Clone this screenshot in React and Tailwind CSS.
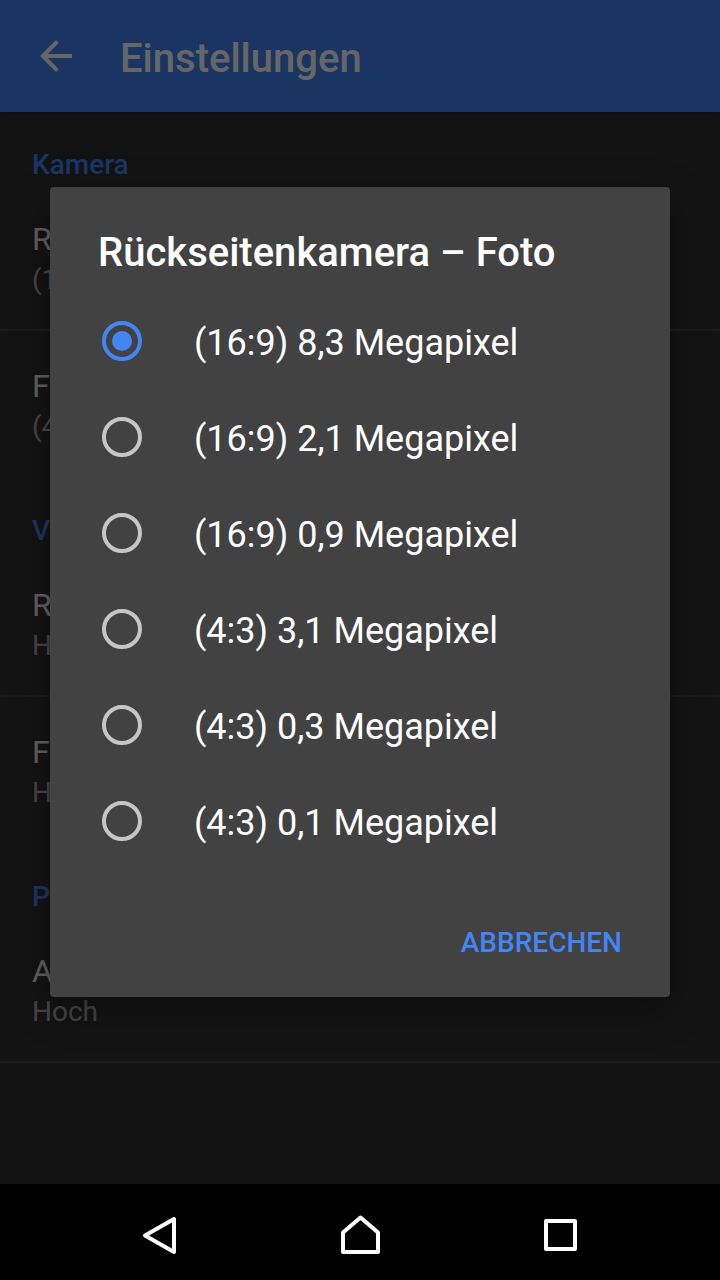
import { useState } from 'react';

const sections = [
  {
    title: 'Kamera',
    items: [
      { title: 'Rückseitenkamera – Foto', summary: '(16:9) 8,3 Megapixel' },
      { title: 'Frontkamera – Foto', summary: '(4:3) 5,0 Megapixel' },
    ],
  },
  {
    title: 'Video',
    items: [
      { title: 'Rückseitenkamera – Video', summary: 'HD 1080p' },
      { title: 'Frontkamera – Video', summary: 'HD 1080p' },
    ],
  },
  {
    title: 'Panorama',
    items: [{ title: 'Auflösung', summary: 'Hoch' }],
  },
];

const resolutions = [
  '(16:9) 8,3 Megapixel',
  '(16:9) 2,1 Megapixel',
  '(16:9) 0,9 Megapixel',
  '(4:3) 3,1 Megapixel',
  '(4:3) 0,3 Megapixel',
  '(4:3) 0,1 Megapixel',
];

function Header() {
  return (
    <header className="relative flex h-28 items-center gap-10 bg-[#4285f4] px-8 shadow-[0_2px_6px_rgba(0,0,0,0.3)]">
      <button type="button" aria-label="Zurück">
        <svg viewBox="0 0 24 24" className="h-12 w-12 fill-white">
          <path d="M20 11H7.83l5.59-5.59L12 4l-8 8 8 8 1.41-1.41L7.83 13H20v-2z" />
        </svg>
      </button>
      <h1 className="pt-1.5 text-[40px] leading-[52px] font-medium">Einstellungen</h1>
    </header>
  );
}

function Settings() {
  return (
    <div className="flex flex-col gap-0.5">
      {sections.map((section) => (
        <section key={section.title}>
          <h2 className="h-18 px-8 pt-8 text-[28px] leading-[42px] font-medium text-[#4285f4]">
            {section.title}
          </h2>
          <ul className="divide-y-2 divide-white/10">
            {section.items.map((item) => (
              <li key={item.title} className="px-8 pt-9 pb-[27px]">
                <p className="text-[32px] leading-[38px] text-white/90">{item.title}</p>
                <p className="text-[28px] leading-[44px] text-white/60">{item.summary}</p>
              </li>
            ))}
          </ul>
        </section>
      ))}
      <hr className="-mt-0.5 border-t-2 border-white/10" />
    </div>
  );
}

function ResolutionDialog({ value, onChange, onClose }) {
  return (
    <div className="absolute inset-0 flex items-center bg-black/60 px-[50px]">
      <div
        role="dialog"
        aria-labelledby="dialog-title"
        className="w-full rounded-sm bg-[#424242] shadow-[0_12px_40px_rgba(0,0,0,0.3)]"
      >
        <h2 id="dialog-title" className="px-12 pt-10 pb-3.5 text-[40px] leading-[52px] font-medium">
          Rückseitenkamera – Foto
        </h2>
        {resolutions.map((resolution) => (
          <label key={resolution} className="flex h-24 items-center gap-[52px] px-[52px]">
            <input
              type="radio"
              name="resolution"
              checked={value === resolution}
              onChange={() => onChange(resolution)}
              className="h-10 w-10 shrink-0 appearance-none rounded-full border-4 border-[#c6c6c6] bg-clip-content p-1.5 checked:border-[#4285f4] checked:bg-[#4285f4]"
            />
            <span className="pt-1 text-[36px] leading-[42px]">{resolution}</span>
          </label>
        ))}
        <div className="flex justify-end px-8 pt-9 pb-4">
          <button
            type="button"
            onClick={onClose}
            className="h-[76px] px-4 text-[28px] font-medium text-[#4285f4]"
          >
            ABBRECHEN
          </button>
        </div>
      </div>
    </div>
  );
}

function NavigationBar() {
  const iconClass = 'h-12 w-12 fill-none stroke-white stroke-4';

  return (
    <nav className="grid h-24 grid-cols-3 place-items-center bg-black px-[60px]">
      <button type="button" aria-label="Zurück">
        <svg viewBox="0 0 48 48" strokeLinejoin="round" className={iconClass}>
          <path d="M9 27.5 38 11V44z" />
        </svg>
      </button>
      <button type="button" aria-label="Startseite">
        <svg viewBox="0 0 48 48" strokeLinejoin="round" className={iconClass}>
          <path d="M24.5 9.5 42 24.5V44H7V24.5z" />
        </svg>
      </button>
      <button type="button" aria-label="Letzte Apps">
        <svg viewBox="0 0 48 48" strokeLinejoin="round" className={iconClass}>
          <path d="M10 13H39V41H10z" />
        </svg>
      </button>
    </nav>
  );
}

function App() {
  const [resolution, setResolution] = useState(resolutions[0]);
  const [open, setOpen] = useState(true);

  return (
    <div className="flex min-h-screen flex-col bg-[#303030] font-['Roboto',sans-serif] text-white">
      <main className="relative flex-1">
        <Header />
        <Settings />
        {open && (
          <ResolutionDialog
            value={resolution}
            onChange={setResolution}
            onClose={() => setOpen(false)}
          />
        )}
      </main>
      <NavigationBar />
    </div>
  );
}

export default App;
